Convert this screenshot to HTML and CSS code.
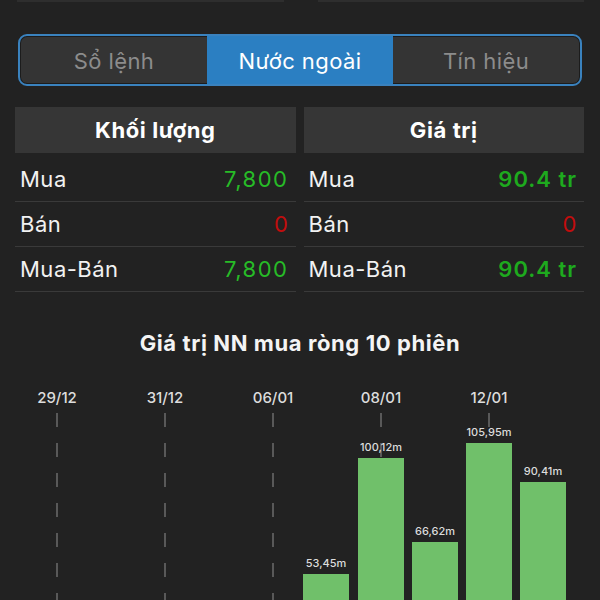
FILE: index.html
```html
<!DOCTYPE html>
<html lang="vi">
<head>
    <meta charset="UTF-8">
    <meta name="viewport" content="width=device-width, initial-scale=1.0">
    <title>Nước ngoài</title>
    <link rel="stylesheet" href="styles.css">
</head>
<body>
    <div class="topbars">
        <div class="topbar"></div>
        <div class="topbar"></div>
    </div>

    <div class="tabs">
        <div class="tab">Sổ lệnh</div>
        <div class="tab active">Nước ngoài</div>
        <div class="tab">Tín hiệu</div>
    </div>

    <div class="stats">
        <div class="col">
            <div class="col-head">Khối lượng</div>
            <div class="row"><span>Mua</span><span class="up">7,800</span></div>
            <div class="row"><span>Bán</span><span class="down">0</span></div>
            <div class="row"><span>Mua-Bán</span><span class="up">7,800</span></div>
        </div>
        <div class="col">
            <div class="col-head">Giá trị</div>
            <div class="row"><span>Mua</span><span class="up bold">90.4 tr</span></div>
            <div class="row"><span>Bán</span><span class="down">0</span></div>
            <div class="row"><span>Mua-Bán</span><span class="up bold">90.4 tr</span></div>
        </div>
    </div>

    <h2 class="chart-title">Giá trị NN mua ròng 10 phiên</h2>

    <svg class="chart" width="600" height="220" viewBox="0 0 600 220">
        <!-- date guides, every 2nd session -->
        <g class="guides">
            <line x1="57" y1="32" x2="57" y2="220"/>
            <line x1="165" y1="32" x2="165" y2="220"/>
            <line x1="273" y1="32" x2="273" y2="220"/>
            <line x1="381" y1="32" x2="381" y2="220"/>
            <line x1="489" y1="32" x2="489" y2="220"/>
        </g>
        <g class="dates">
            <text x="57" y="22">29/12</text>
            <text x="165" y="22">31/12</text>
            <text x="273" y="22">06/01</text>
            <text x="381" y="22">08/01</text>
            <text x="489" y="22">12/01</text>
        </g>
        <g class="bars">
            <rect x="303" y="193" width="46" height="40"/>
            <rect x="358" y="77" width="46" height="160"/>
            <rect x="412" y="161" width="46" height="80"/>
            <rect x="466" y="62" width="46" height="170"/>
            <rect x="520" y="101" width="46" height="130"/>
        </g>
        <g class="values">
            <text x="326" y="186">53,45m</text>
            <text x="381" y="70">100,12m</text>
            <text x="435" y="154">66,62m</text>
            <text x="489" y="55">105,95m</text>
            <text x="543" y="94">90,41m</text>
        </g>
    </svg>
</body>
</html>
```

FILE: styles.css
```css
*{
    margin: 0px;
    padding: 0px;
    box-sizing: border-box;
}
body{
    background-color: #222222;
    color: #ffffff;
    font-family: "Inter", "Noto Sans", sans-serif;
    width: 600px;
    height: 600px;
    overflow: hidden;
}
.topbars{
    display: flex;
    gap: 34px;
    padding: 0px 16px 0px 17px;
}
.topbar{
    flex: 1;
    height: 2px;
    background-color: #2e2e2e;
}
.tabs{
    display: flex;
    margin: 32px 18px 0px 18px;
    height: 52px;
    border: 2px solid #3a82be;
    border-radius: 9px;
    overflow: hidden;
    background-color: #1c1c1c;
    padding: 1px;
}
.tab{
    flex: 1;
    display: flex;
    justify-content: center;
    align-items: center;
    background-color: #343434;
    color: #8c8c8c;
    font-size: 22px;
    letter-spacing: 0.4px;
    padding-top: 2px;
}
.tab:first-child{
    border-radius: 6px 0px 0px 6px;
}
.tab:last-child{
    border-radius: 0px 6px 6px 0px;
}
.tab.active{
    background-color: #2b7fc2;
    color: #ffffff;
    margin: -1px 0px;
}
.stats{
    display: flex;
    gap: 8px;
    padding: 0px 16px 0px 15px;
    margin-top: 21px;
}
.col{
    flex: 1;
}
.col-head{
    height: 46px;
    background-color: #363636;
    display: flex;
    justify-content: center;
    align-items: center;
    font-size: 22px;
    font-weight: 700;
    letter-spacing: 0.6px;
    margin-bottom: 4px;
}
.row{
    display: flex;
    justify-content: space-between;
    align-items: center;
    height: 45px;
    border-bottom: 1px solid #3a3a3a;
    padding: 0px 7px 0px 5px;
    font-size: 22px;
    letter-spacing: 0.5px;
    color: #f2f2f2;
}
.up{
    color: #27bb27;
    letter-spacing: 1.5px;
}
.up.bold{
    font-weight: 600;
    color: #1eaa1e;
    letter-spacing: 1px;
}
.down{
    color: #c20d0d;
}
.chart-title{
    text-align: center;
    font-size: 22px;
    font-weight: 700;
    letter-spacing: 0.6px;
    margin-top: 38px;
    color: #f4f4f4;
}
.chart{
    display: block;
    margin-top: 25px;
}
.guides line{
    stroke: #6c6c6c;
    stroke-width: 1.5;
    stroke-dasharray: 14 16;
}
.dates text{
    fill: #dddddd;
    font-size: 15px;
    font-weight: 500;
    text-anchor: middle;
}
.bars rect{
    fill: #70c06a;
}
.values text{
    fill: #dcdcdc;
    font-size: 11px;
    font-weight: 500;
    text-anchor: middle;
}
```
